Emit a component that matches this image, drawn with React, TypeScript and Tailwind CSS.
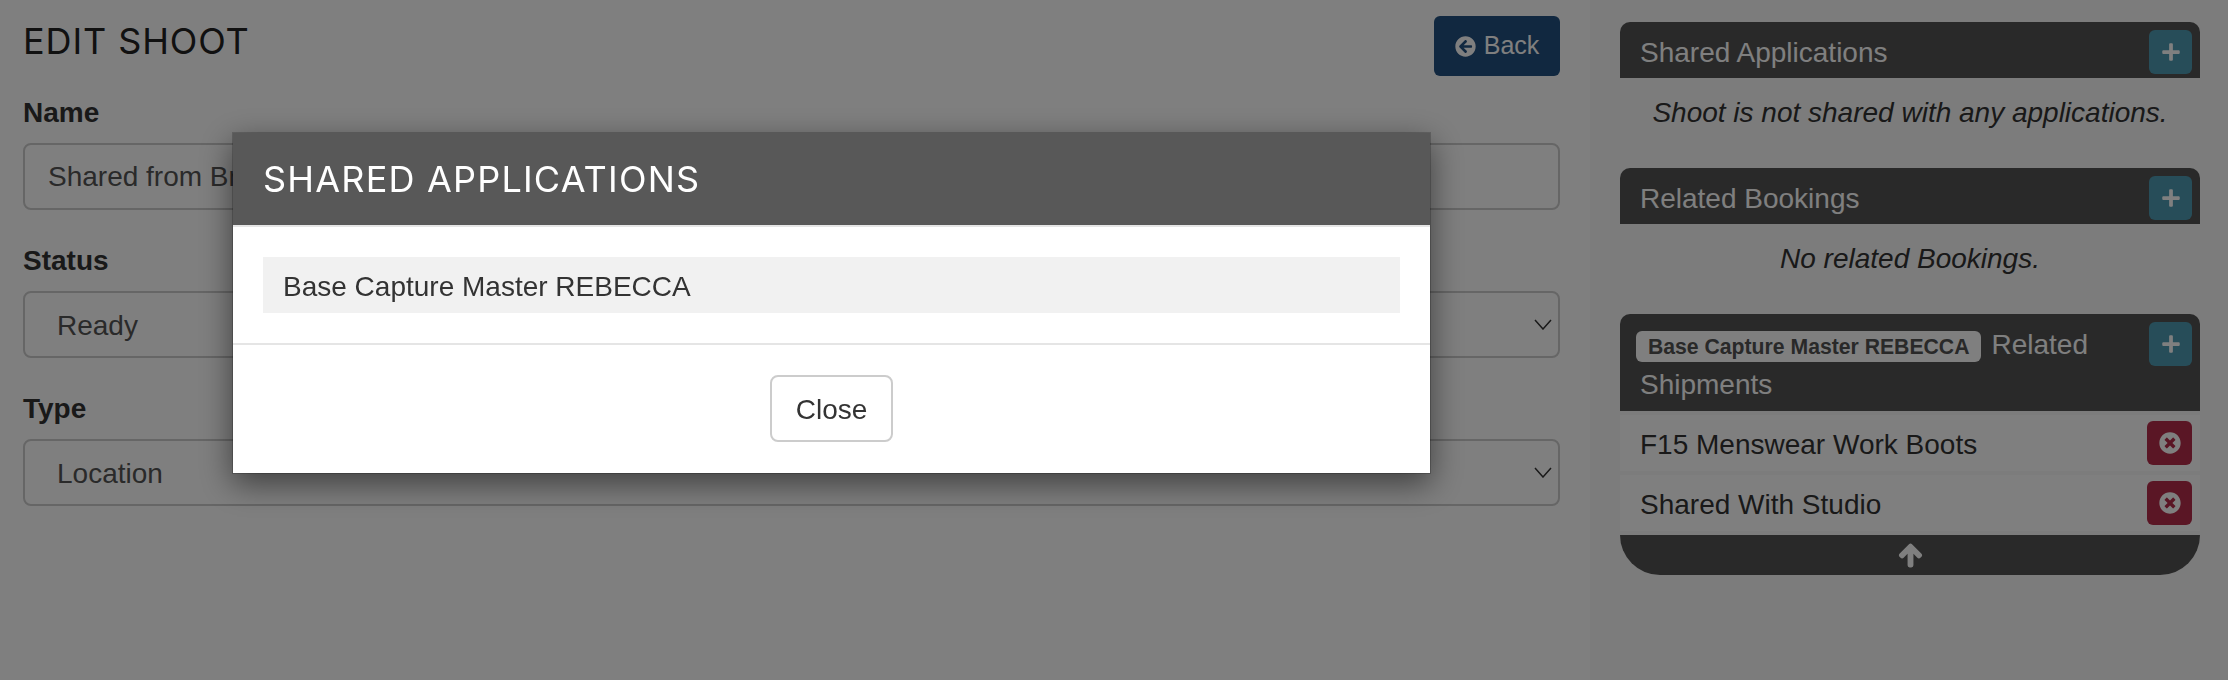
import { FaArrowCircleLeft, FaArrowUp, FaPlus, FaTimesCircle } from "react-icons/fa";

function Field({ label, value, select, className }: { label: string; value: string; select?: boolean; className?: string }) {
  return (
    <div className={className}>
      <div className="h-[40px] text-[28px] font-bold leading-[40px] text-[#333]">{label}</div>
      <div className={`mt-[10px] flex h-[67px] items-center justify-between rounded-lg border-2 border-[#ccc] bg-white pr-[6px] text-[28px] text-[#555] ${select ? "pl-[32px]" : "pl-[23px]"}`}>
        <span className={select ? "pt-[2px]" : ""}>{value}</span>
        {select && (
          <svg width="18" height="11" viewBox="0 0 18 11" fill="none" stroke="#333" strokeWidth="1.5">
            <path d="M1 1l8 9 8-9" />
          </svg>
        )}
      </div>
    </div>
  );
}

function PanelHead({ children }: { children: React.ReactNode }) {
  return (
    <div className="flex justify-between rounded-t-[10px] bg-[#525252] pb-[4px] pl-[20px] pr-[8px] pt-[8px] text-[28px] leading-[40px] text-white">
      {children}
    </div>
  );
}

function AddButton() {
  return (
    <button className="flex h-[44px] w-[43px] shrink-0 items-center justify-center rounded-md bg-[#4f9bb3] text-white">
      <FaPlus size={20} />
    </button>
  );
}

function ShipmentRow({ name }: { name: string }) {
  return (
    <div className="mt-[4px] flex h-[56px] items-center justify-between bg-white pl-[20px] pr-[8px] text-[28px] text-[#333]">
      <span className="pt-[3px]">{name}</span>
      <button className="flex h-[44px] w-[45px] items-center justify-center rounded-md bg-[#b52d4a] text-white">
        <FaTimesCircle size={22} />
      </button>
    </div>
  );
}

export default function App() {
  return (
    <div className="relative flex h-[680px] w-[2228px] overflow-hidden bg-white font-['Liberation_Sans',Arial,sans-serif]">
      {/* main form */}
      <div className="w-[1590px] pl-[23px] pr-[30px] pt-[16px]">
        <div className="flex h-[60px] items-start justify-between">
          <h1 className="-mt-[2px] font-['Inter',sans-serif] text-[36px] font-normal tracking-[0.9px] text-[#222]">EDIT SHOOT</h1>
          <button className="flex h-[60px] w-[126px] items-center justify-center gap-[8px] rounded-md bg-[#225080] text-[25px] text-white">
            <FaArrowCircleLeft size={21} />
            Back
          </button>
        </div>
        <Field className="mt-[17px]" label="Name" value="Shared from Bruce" />
        <Field className="mt-[31px]" label="Status" value="Ready" select />
        <Field className="mt-[31px]" label="Type" value="Location" select />
      </div>

      {/* sidebar */}
      <div className="w-[638px] bg-[#f8f8f8] pl-[30px] pr-[28px] pt-[22px]">
        <PanelHead>
          <div className="pt-[3px]">Shared Applications</div>
          <AddButton />
        </PanelHead>
        <div className="h-[90px] pt-[15px] text-center text-[28px] italic leading-[40px] text-[#333]">
          Shoot is not shared with any applications.
        </div>

        <PanelHead>
          <div className="pt-[3px]">Related Bookings</div>
          <AddButton />
        </PanelHead>
        <div className="h-[90px] pt-[15px] text-center text-[28px] italic leading-[40px] text-[#333]">
          No related Bookings.
        </div>

        <PanelHead>
          <div className="flex flex-wrap items-center gap-x-[10px] pb-[2px] pt-[3px]">
            <span className="-ml-[4px] mt-[2px] rounded-md bg-white px-[12px] text-[21.2px] font-bold leading-[31px] text-[#525252]">
              Base Capture Master REBECCA
            </span>
            <span>Related</span>
            <span>Shipments</span>
          </div>
          <AddButton />
        </PanelHead>
        <ShipmentRow name="F15 Menswear Work Boots" />
        <ShipmentRow name="Shared With Studio" />
        <div className="mt-[4px] flex h-[40px] items-center justify-center rounded-b-[40px] bg-[#525252] text-white">
          <FaArrowUp size={25} stroke="currentColor" strokeWidth={40} />
        </div>
      </div>

      {/* modal */}
      <div className="fixed inset-0 bg-black/50" />
      <div className="fixed left-[232px] top-[132px] w-[1199px] border border-black/20 bg-white bg-clip-padding shadow-[0_10px_30px_rgba(0,0,0,0.5)]">
        <div className="flex h-[94px] items-center border-b-2 border-[#e5e5e5] bg-[#585858] pl-[30px]">
          <h2 className="font-['Inter',sans-serif] text-[36px] font-normal tracking-[1.2px] text-white">SHARED APPLICATIONS</h2>
        </div>
        <div className="h-[116px] px-[30px] pt-[30px]">
          <div className="flex h-[56px] items-center bg-[#f1f1f1] px-[20px] pt-[3px] text-[28px] text-[#333]">
            Base Capture Master REBECCA
          </div>
        </div>
        <div className="flex h-[130px] justify-center border-t-2 border-[#e5e5e5] pt-[30px]">
          <button className="h-[67px] w-[123px] rounded-lg border-2 border-[#ccc] bg-white pt-[2px] text-[28px] text-[#333]">Close</button>
        </div>
      </div>
    </div>
  );
}
